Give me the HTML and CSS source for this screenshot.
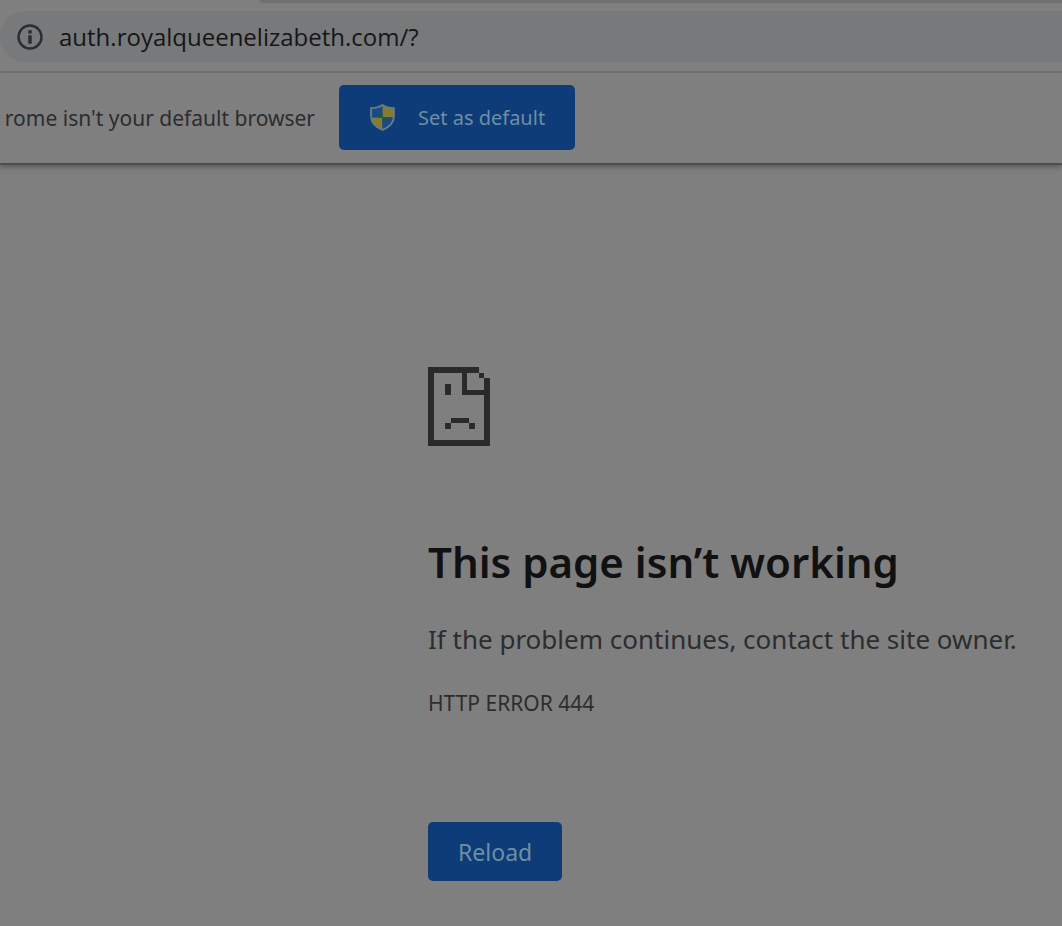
FILE: index.html
```
<!DOCTYPE html>
<html lang="en">
<head>
  <meta charset="UTF-8" />
  <meta name="viewport" content="width=device-width, initial-scale=1.0"/>
  <title>auth.royalqueenelizabeth.com</title>
  <link rel="stylesheet" href="styles.css">
</head>
<body>

<div class="tab-strip"></div>

<header class="toolbar">
  <div class="address-bar">
    <svg class="info-icon" viewBox="0 0 26 26" aria-hidden="true">
      <circle cx="13" cy="13" r="11.5" fill="none" stroke="#2c2d2f" stroke-width="2.4"/>
      <path d="M11.3 6.2h3.4v3.2h-3.4zM11.3 11.2h3.4v8.6h-3.4z" fill="#2c2d2f"/>
    </svg>
    <input class="url" type="text" aria-label="Address" value="auth.royalqueenelizabeth.com/?">
  </div>
</header>

<div class="infobar">
  <div class="infobar-text">rome isn't your default browser</div>
  <button class="button default-button" type="button">
    <svg class="shield" viewBox="0 0 26 28" aria-hidden="true">
      <clipPath id="shield-shape">
        <path d="M13 2C10 4 6 5 2 5v8c0 6 4 10 11 13 7-3 11-7 11-13V5c-4 0-8-1-11-3z"/>
      </clipPath>
      <g clip-path="url(#shield-shape)">
        <path d="M0 0h13v14H0z" fill="#174a86"/>
        <path d="M13 0h13v14H13z" fill="#857b33"/>
        <path d="M0 14h13v14H0z" fill="#857b33"/>
        <path d="M13 14h13v14H13z" fill="#174a86"/>
        <path d="M9 10h4v4H9zM13 14h4v4h-4z" fill="#1d593f"/>
      </g>
      <path d="M13 2C10 4 6 5 2 5v8c0 6 4 10 11 13 7-3 11-7 11-13V5c-4 0-8-1-11-3z" fill="none" stroke="#6b7c82" stroke-width="1.8"/>
    </svg>
    Set as default
  </button>
</div>

<main class="error-page">
  <svg class="sad-page" viewBox="0 0 11 14" shape-rendering="crispEdges" aria-hidden="true">
    <path d="M0 0h9v1H7v3h4v1H6V1H1v12h9V2h1v12H0zM9 1h1v1H9zM3 3h1v2H3zM4 9h3.3v1H4zM3 10h1v1H3zM7.3 10h1v1h-1z" fill="#2a2a2a"/>
  </svg>
  <h1>This page isn’t working</h1>
  <p class="message">If the problem continues, contact the site owner.</p>
  <p class="error-code">HTTP ERROR 444</p>
  <button class="button reload-button" type="button">Reload</button>
</main>

</body>
</html>
```

FILE: styles.css
```
* {
  box-sizing: border-box;
}

body {
  margin: 0;
  background-color: #7f7f7f;
  color: #2c2d2e;
  font-family: "Noto Sans", "Open Sans", sans-serif;
  overflow-x: hidden;
}

.tab-strip {
  height: 3px;
  margin-left: 260px;
  background-color: #6f7072;
  border-bottom-left-radius: 8px;
}

.toolbar {
  padding: 8px 0 9px;
  border-bottom: 2px solid #727375;
}

.address-bar {
  display: flex;
  align-items: center;
  height: 51px;
  padding-left: 17px;
  background-color: #78797b;
  border-radius: 26px 0 0 26px;
}

.info-icon {
  width: 26px;
  height: 26px;
  flex: none;
}

.url {
  flex: 1;
  min-width: 0;
  margin-left: 16px;
  padding: 0;
  border: none;
  outline: none;
  background: none;
  color: #151617;
  font-family: "Open Sans", "Noto Sans", sans-serif;
  font-size: 24px;
}

.infobar {
  display: flex;
  align-items: center;
  gap: 24px;
  padding: 12px 0 13px;
  border-bottom: 2px solid #4e4e4e;
  box-shadow: 0 2px 5px rgba(0, 0, 0, 0.3);
}

.infobar-text {
  display: flex;
  justify-content: flex-end;
  width: 315px;
  overflow: hidden;
  white-space: nowrap;
  font-size: 21px;
}

.button {
  border: none;
  border-radius: 5px;
  background-color: #0e3c78;
  color: #6f8ea3;
  font-family: inherit;
  cursor: pointer;
}

.default-button {
  display: flex;
  align-items: center;
  gap: 22px;
  height: 65px;
  padding: 0 30px;
  font-size: 20px;
}

.shield {
  width: 27px;
  height: 29px;
}

.error-page {
  padding: 202px 24px 40px 428px;
}

.sad-page {
  display: block;
  width: 62px;
  height: 79px;
}

h1 {
  margin: 88px 0 0;
  color: #111;
  font-size: 42px;
  font-weight: 600;
  line-height: 56px;
  white-space: nowrap;
}

.message {
  margin: 31px 0 0;
  font-size: 26px;
  line-height: 36px;
  white-space: nowrap;
}

.error-code {
  margin: 32px 0 0;
  font-size: 21px;
  line-height: 28px;
}

.reload-button {
  height: 59px;
  margin-top: 105px;
  padding: 0 30px;
  font-size: 23px;
}
```
